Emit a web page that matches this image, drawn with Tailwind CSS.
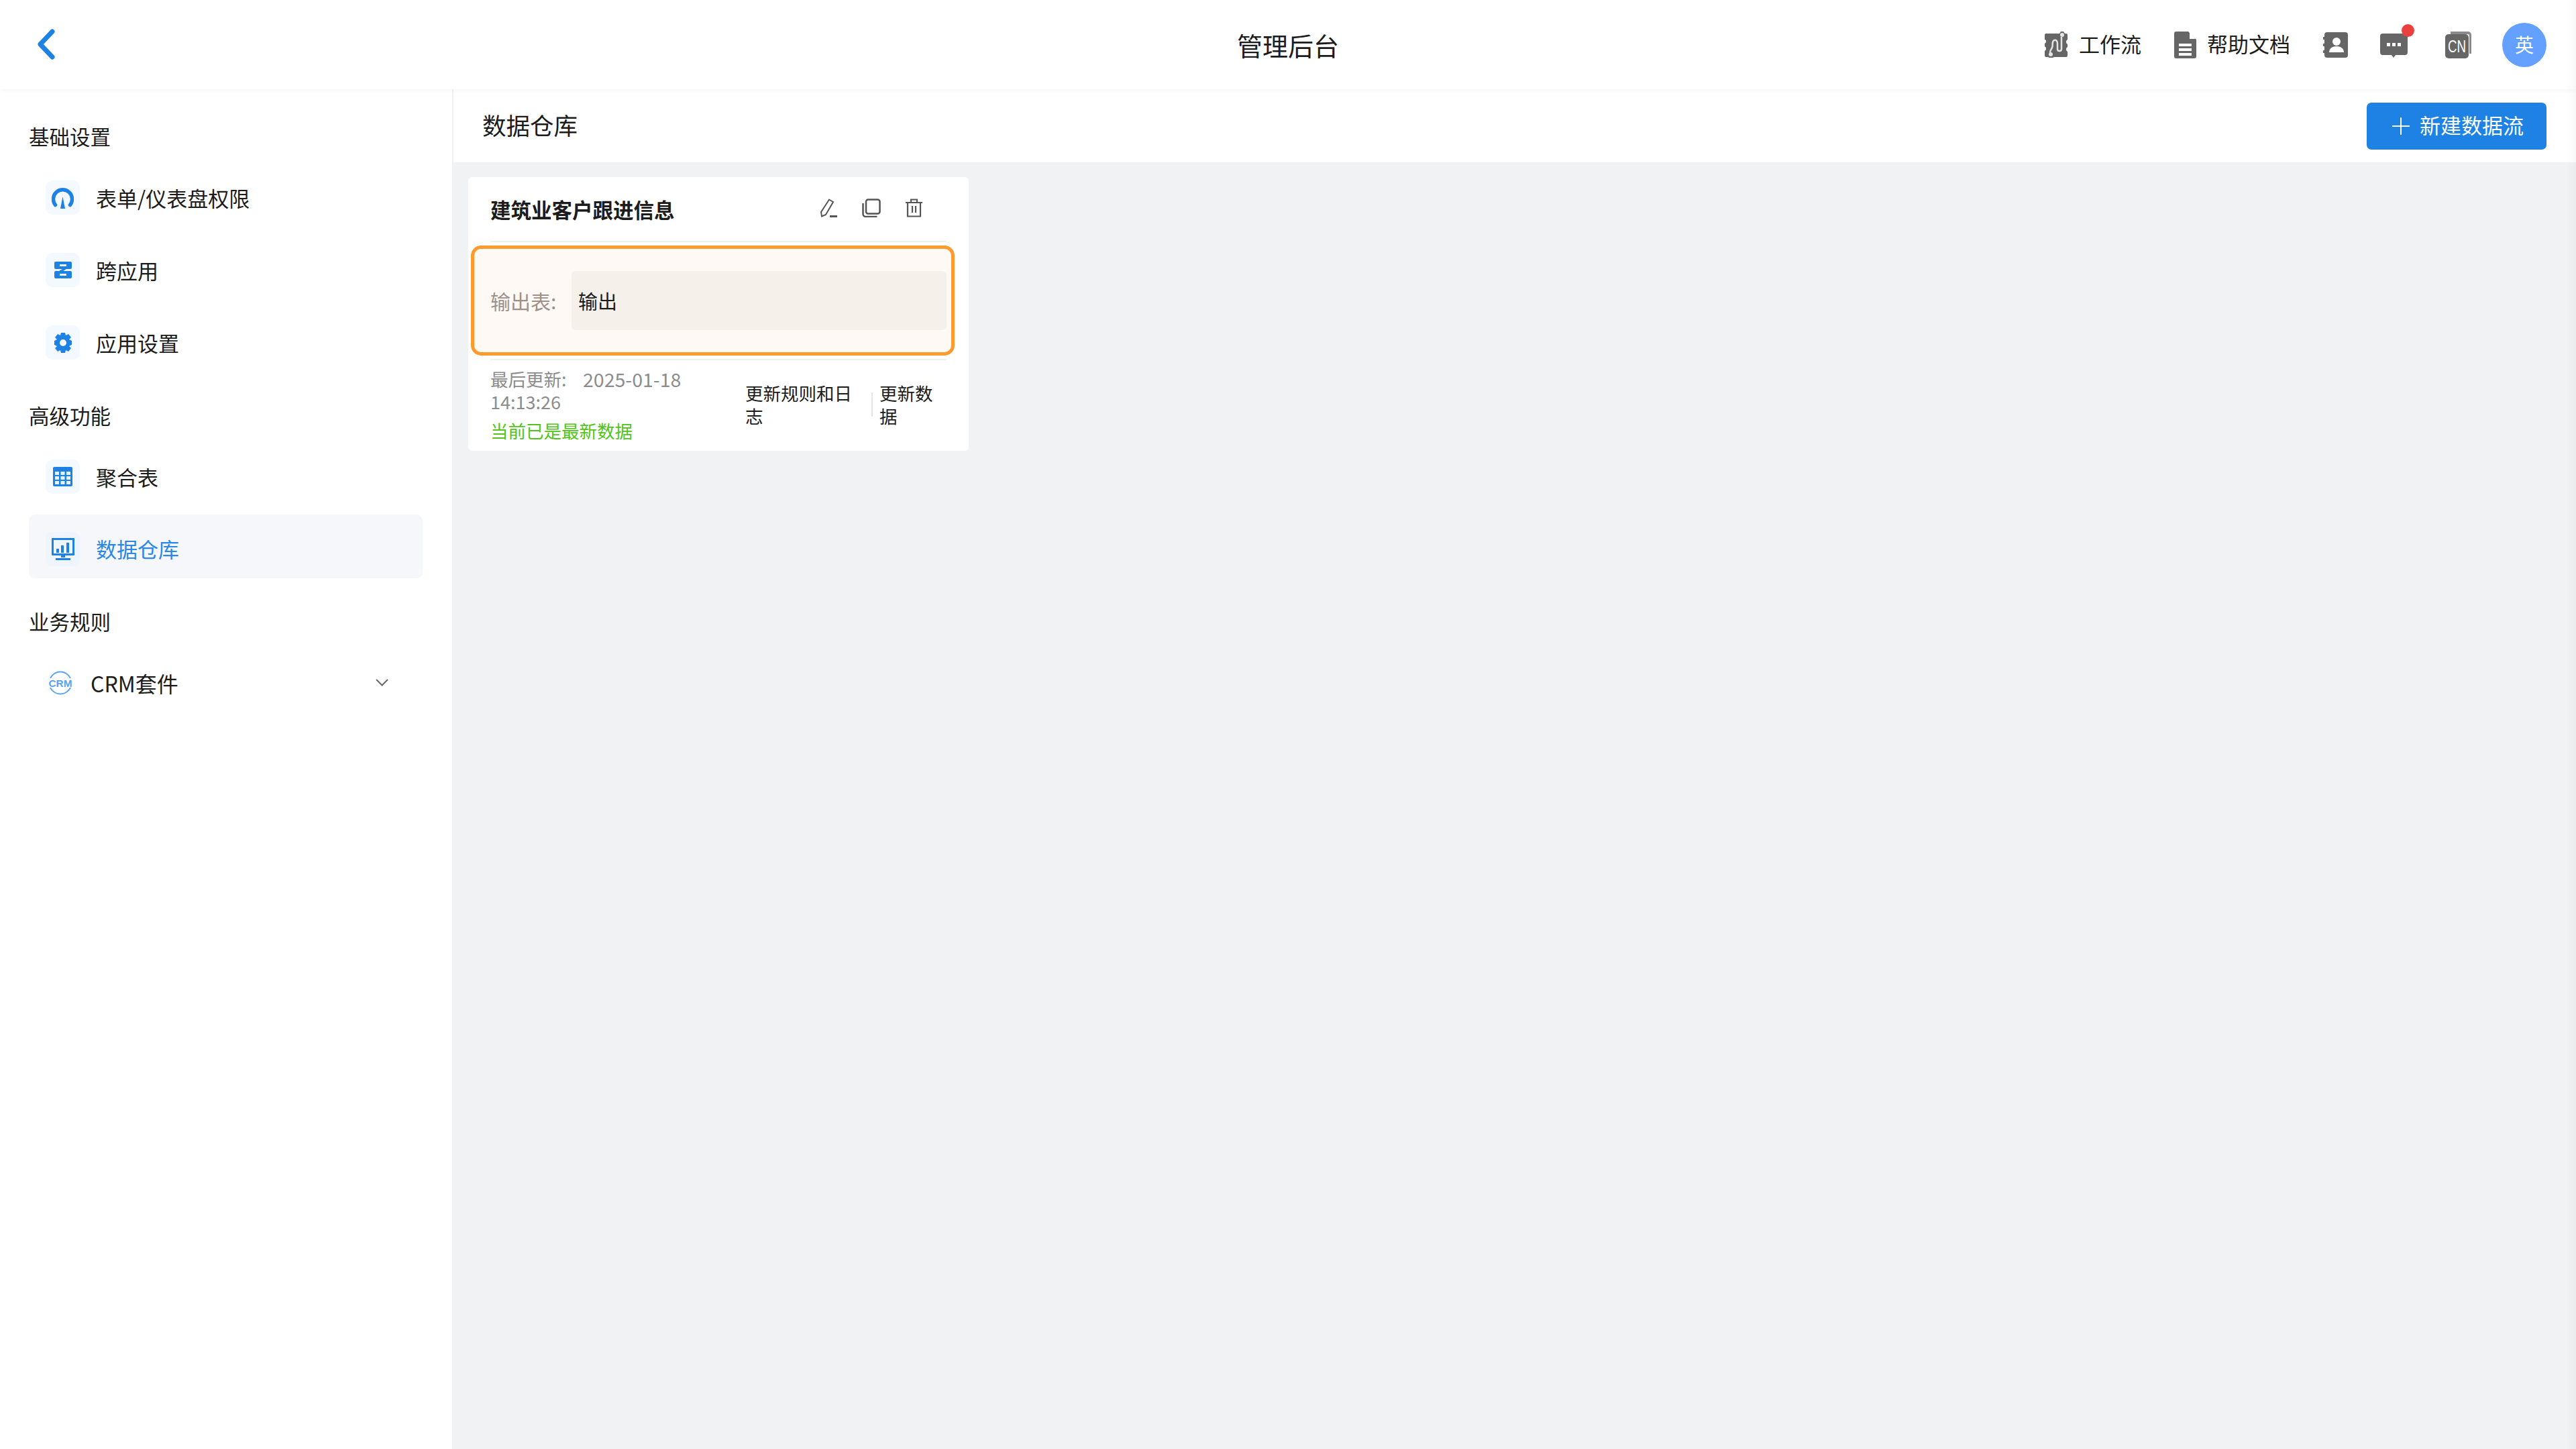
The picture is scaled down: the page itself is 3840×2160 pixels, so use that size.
<!DOCTYPE html>
<html>

<head>
    <meta charset="utf-8">
    <title>管理后台</title>
    <script src="https://cdn.jsdelivr.net/npm/@tailwindcss/browser@4"></script>
</head>

<body class="bg-[#f1f2f4] text-[#1c1c1c] [font-family:'Noto_Sans_CJK_SC',sans-serif]">
    <div class="relative w-[3840px] h-[2160px] flex flex-col overflow-hidden">

        <!-- Top bar -->
        <header class="relative z-10 h-[133px] shrink-0 bg-white shadow-[0_2px_6px_rgba(0,0,0,0.04)] flex items-center pr-[44px]">
            <svg class="ml-[56px] mb-[2px] w-[26px] h-[46px]" viewBox="0 0 26 46" fill="none" stroke="#1e82e4" stroke-width="7" stroke-linecap="round" stroke-linejoin="round"><path d="M22 4 4 23l18 19" /></svg>
            <h1 class="absolute left-0 right-0 text-center text-[38px] leading-[130px] font-normal">管理后台</h1>
            <div class="ml-auto flex items-center relative">
                <svg class="w-[34px] h-[39px]" viewBox="0 0 34 39"><path fill="#666" d="M2 3h20l2-3h4l2 3h2a2 2 0 0 1 2 2v7l-2 2v3l2 2v4l-2 2v3l2 2v6a2 2 0 0 1-2 2H14l-2 1H7l-2-1H2a2 2 0 0 1-2-2v-7l2-2v-3l-2-2v-4l2-2v-3L0 12V5a2 2 0 0 1 2-2z" /><path fill="none" stroke="#e4e4e4" stroke-width="2.500" d="M9 33c-3-3 1-6 2-9 2-5-1-9 3-11 3-1 5 1 5 5v8c0 4 6 4 6 0V8" /><circle cx="26" cy="5" r="3" fill="#e4e4e4" /><circle cx="9" cy="34" r="3" fill="#e4e4e4" /></svg>
                <span class="ml-[17px] mb-[3px] text-[31px] leading-[40px]">工作流</span>
                <svg class="ml-[49px] w-[33px] h-[40px]" viewBox="0 0 33 40"><path fill="#666" d="M3 0h18l12 12v25a3 3 0 0 1-3 3H3a3 3 0 0 1-3-3V3a3 3 0 0 1 3-3z" /><path fill="#fff" d="M23 1v10h9zM7 18h19v4H7zM7 25h19v4H7zM7 32h19v4H7z" /></svg>
                <span class="ml-[16px] mb-[3px] text-[31px] leading-[40px]">帮助文档</span>
                <svg class="ml-[49px] w-[37px] h-[38px]" viewBox="0 0 37 38"><rect x="2" width="35" height="38" rx="4" fill="#666" /><path fill="#666" d="M0 7h4v4H0zM0 17h4v4H0zM0 27h4v4H0z" /><circle cx="20" cy="14" r="6" fill="#fff" /><path fill="#fff" d="M9 30c0-6 5-9 11-9s11 3 11 9z" /></svg>
                <div class="ml-[48px] relative w-[41px] h-[36px] mt-[3px]">
                    <svg class="w-[41px] h-[36px]" viewBox="0 0 41 36"><path fill="#666" d="M4 0h33a4 4 0 0 1 4 4v24a4 4 0 0 1-4 4H23l-3 4-3-4H4a4 4 0 0 1-4-4V4a4 4 0 0 1 4-4z" /><path fill="#fff" d="M10 14h5v5h-5zM18 14h5v5h-5zM26 14h5v5h-5z" /></svg>
                    <span class="absolute left-[32px] top-[-14px] w-[19px] h-[19px] rounded-full bg-[#ea4040]"></span>
                </div>
                <svg class="ml-[56px] w-[39px] h-[40px]" viewBox="0 0 39 40"><path fill="#8a8a8a" d="M8 0h26a5 5 0 0 1 5 5v28h-3V6a2 2 0 0 0-2-2H8z" /><rect y="4" width="35" height="36" rx="5" fill="#666" /><text x="17.5" y="31" text-anchor="middle" fill="#fff" font-size="25" textLength="27" lengthAdjust="spacingAndGlyphs" font-family="Liberation Sans">CN</text></svg>
                <span class="ml-[46px] w-[66px] h-[66px] rounded-full bg-[#64a0ff] text-white text-[28px] leading-[64px] text-center">英</span>
            </div>
        </header>

        <div class="flex-1 flex min-h-0">
            <!-- Sidebar -->
            <aside class="w-[676px] shrink-0 bg-white border-r-2 border-[#f1f2f4] pl-[43px] pr-[44px] pt-[48px]">
                <div class="text-[30.5px] leading-[44px]">基础设置</div>

                <div class="mt-[22px] h-[95px] pl-[25px] flex items-center">
                    <span class="w-[51px] h-[51px] rounded-[10px] bg-[#f4f9ff] flex items-center justify-center">
                        <svg class="w-[33px] h-[33px]" viewBox="0 0 33 33"><path fill="none" stroke="#1e82e4" stroke-width="5.500" stroke-linecap="round" d="M5.500 27.500a14 14 0 1 1 22 0" /><path fill="#1e82e4" d="m16.500 15 3.500 18h-7z" /></svg>
                    </span>
                    <span class="ml-[24px] text-[31px] leading-[40px]">表单/仪表盘权限</span>
                </div>
                <div class="mt-[13px] h-[95px] pl-[25px] flex items-center">
                    <span class="w-[51px] h-[51px] rounded-[10px] bg-[#f4f9ff] flex items-center justify-center">
                        <svg class="w-[26px] h-[25px]" viewBox="0 0 26 25"><path fill="#1e82e4" fill-rule="evenodd" d="M2 0h22a2 2 0 0 1 2 2v7a2 2 0 0 1-2 2H18l-5 3h11a2 2 0 0 1 2 2v7a2 2 0 0 1-2 2H2a2 2 0 0 1-2-2v-7a2 2 0 0 1 2-2h5l5-3H2a2 2 0 0 1-2-2V2a2 2 0 0 1 2-2zm6 4v3h10V4zm0 14v3h10v-3z" /></svg>
                    </span>
                    <span class="ml-[24px] text-[31px] leading-[40px]">跨应用</span>
                </div>
                <div class="mt-[13px] h-[95px] pl-[25px] flex items-center">
                    <span class="w-[51px] h-[51px] rounded-[10px] bg-[#f4f9ff] flex items-center justify-center">
                        <svg class="w-[30px] h-[30px]" viewBox="0 0 30 30"><path fill="#1e82e4" fill-rule="evenodd" d="M12 0h6l1 4 4-2 4 5-3 3 4 2v6l-4 2 3 3-4 5-4-2-1 4h-6l-1-4-4 2-4-5 3-3-4-2v-6l4-2-3-3 4-5 4 2zm3 10a5 5 0 1 0 0 10 5 5 0 0 0 0-10z" /></svg>
                    </span>
                    <span class="ml-[24px] text-[31px] leading-[40px]">应用设置</span>
                </div>

                <div class="mt-[39px] text-[30.5px] leading-[44px]">高级功能</div>

                <div class="mt-[22px] h-[95px] pl-[25px] flex items-center">
                    <span class="w-[51px] h-[51px] rounded-[10px] bg-[#f4f9ff] flex items-center justify-center">
                        <svg class="w-[29px] h-[29px]" viewBox="0 0 29 29"><rect width="29" height="29" rx="2" fill="#1e82e4" /><path fill="#e6f1fc" d="M3 7h6v5H3zM11.500 7h6v5h-6zM20 7h6v5h-6zM3 14h6v5H3zM11.500 14h6v5h-6zM20 14h6v5h-6zM3 21h6v5H3zM11.500 21h6v5h-6zM20 21h6v5h-6z" /></svg>
                    </span>
                    <span class="ml-[24px] text-[31px] leading-[40px]">聚合表</span>
                </div>
                <div class="mt-[9px] h-[95px] pl-[25px] pt-[7px] rounded-[9px] bg-[#f5f7fa] flex items-center">
                    <span class="w-[51px] h-[51px] rounded-[10px] bg-[#eef5fd] flex items-center justify-center">
                        <svg class="w-[34px] h-[33px]" viewBox="0 0 34 33"><path fill="#1e82e4" fill-rule="evenodd" d="M1 0h32a1 1 0 0 1 1 1v24a1 1 0 0 1-1 1H1a1 1 0 0 1-1-1V1a1 1 0 0 1 1-1zm2 3v20h28V3z" /><path fill="#1e82e4" d="M7 16h4v6H7zM14 11h4v11h-4zM22 7h4v15h-4zM14 26h6v3h-6zM6 30h22v3H6z" /></svg>
                    </span>
                    <span class="ml-[24px] text-[31px] leading-[40px] text-[#2b88e6]">数据仓库</span>
                </div>

                <div class="mt-[42px] text-[30.5px] leading-[44px]">业务规则</div>

                <div class="mt-[22px] h-[95px] pl-[29px] pr-[48px] flex items-center">
                    <svg class="w-[36px] h-[36px]" viewBox="0 0 36 36"><circle cx="18" cy="18" r="16.500" fill="none" stroke="#5ba3ee" stroke-width="2" /><rect x="0" y="11" width="36" height="14" fill="#fff" /><text x="18" y="23.500" text-anchor="middle" fill="#5ba3ee" font-size="14.500" font-weight="700" textLength="35" lengthAdjust="spacingAndGlyphs" font-family="Liberation Sans">CRM</text></svg>
                    <span class="ml-[27px] text-[32px] leading-[40px]">CRM套件</span>
                    <svg class="ml-auto mr-[3px] w-[19px] h-[11px]" viewBox="0 0 19 11" fill="none" stroke="#666" stroke-width="2"><path d="m1 1 8.500 8.500L18 1" /></svg>
                </div>
            </aside>

            <!-- Main -->
            <main class="flex-1 min-w-0">
                <div class="h-[109px] bg-white flex items-center pl-[43px] pr-[44px]">
                    <h2 class="mb-[3px] text-[35.5px] leading-[48px] font-normal">数据仓库</h2>
                    <button class="ml-auto w-[268px] h-[70px] rounded-[7px] bg-[#1e82e4] text-white flex items-center pl-[38px]">
                        <svg class="w-[26px] h-[26px]" viewBox="0 0 26 26" stroke="#fff" stroke-width="2"><path d="M13 0v26M0 13h26" /></svg>
                        <span class="ml-[15px] mb-[3px] text-[31px] leading-[40px]">新建数据流</span>
                    </button>
                </div>

                <div class="pt-[22px] pl-[22px]">
                    <!-- Card -->
                    <section class="w-[746px] h-[408px] bg-white rounded-[6px] px-[33px] relative">
                        <div class="h-[97px] border-b-2 border-[#f0f0f0] flex items-center">
                            <h3 class="text-[30.5px] leading-[40px] font-bold">建筑业客户跟进信息</h3>
                            <div class="ml-auto mr-[36px] mb-[4px] flex items-center">
                                <svg class="w-[26px] h-[28px]" viewBox="0 0 26 28" fill="none" stroke="#555" stroke-width="2"><path d="M14 1.500 20 5 9 24l-6 2.500-1-6.500z" /><path stroke-width="3" d="M15 26.500h11" /></svg>
                                <svg class="ml-[37px] w-[28px] h-[28px]" viewBox="0 0 28 28" fill="none" stroke="#555" stroke-width="2.500"><rect x="6" y="1.500" width="20.500" height="21" rx="3" /><path d="M1.500 7v16a4 4 0 0 0 4 4h17" /></svg>
                                <svg class="ml-[37px] w-[25px] h-[28px]" viewBox="0 0 25 28" fill="none" stroke="#555" stroke-width="2.200"><path d="M0 6h25M8 6V1.500h9V6M3 6v20.500h19V6M10 11v10M15 11v10" /></svg>
                            </div>
                        </div>

                        <!-- Output box, wider than the card's padding -->
                        <div class="ml-[-29px] mr-[-12px] mt-[5px] h-[164px] border-[5px] border-[#ff9a2e] rounded-[15px] bg-[#fef9f5] flex items-center pl-[24px] pr-[7px]">
                            <span class="w-[121px] shrink-0 text-[30px] leading-[40px] text-[#9c918a]">输出表:</span>
                            <div class="flex-1 h-[88px] rounded-[7px] bg-[#f6f0eb] pl-[10px] flex items-center text-[29px] leading-[40px]">输出</div>
                        </div>

                        <div class="mt-[5px] border-t-2 border-[#f0f0f0] flex text-[26.5px] leading-[34px]">
                            <div class="w-[380px] shrink-0 pt-[11px]">
                                <div class="text-[#8c8c8c] flex"><span class="w-[138px]">最后更新:</span><span class="text-[28.5px]">2025-01-18</span></div>
                                <div class="text-[#8c8c8c] text-[27px]">14:13:26</div>
                                <div class="mt-[9px] text-[#52c41a]">当前已是最新数据</div>
                            </div>
                            <div class="flex items-center pt-[32px] self-start">
                                <span class="w-[160px]">更新规则和日志</span>
                                <span class="ml-[28px] w-[2px] h-[36px] bg-[#e4e4e4]"></span>
                                <span class="ml-[10px] w-[80px]">更新数据</span>
                            </div>
                        </div>
                    </section>
                </div>
            </main>
        </div>

        <!-- Faint shade along the window's right edge -->
        <div class="absolute z-20 top-0 right-0 w-[14px] h-full bg-linear-to-r from-transparent to-black/[0.03]"></div>
    </div>
</body>

</html>
